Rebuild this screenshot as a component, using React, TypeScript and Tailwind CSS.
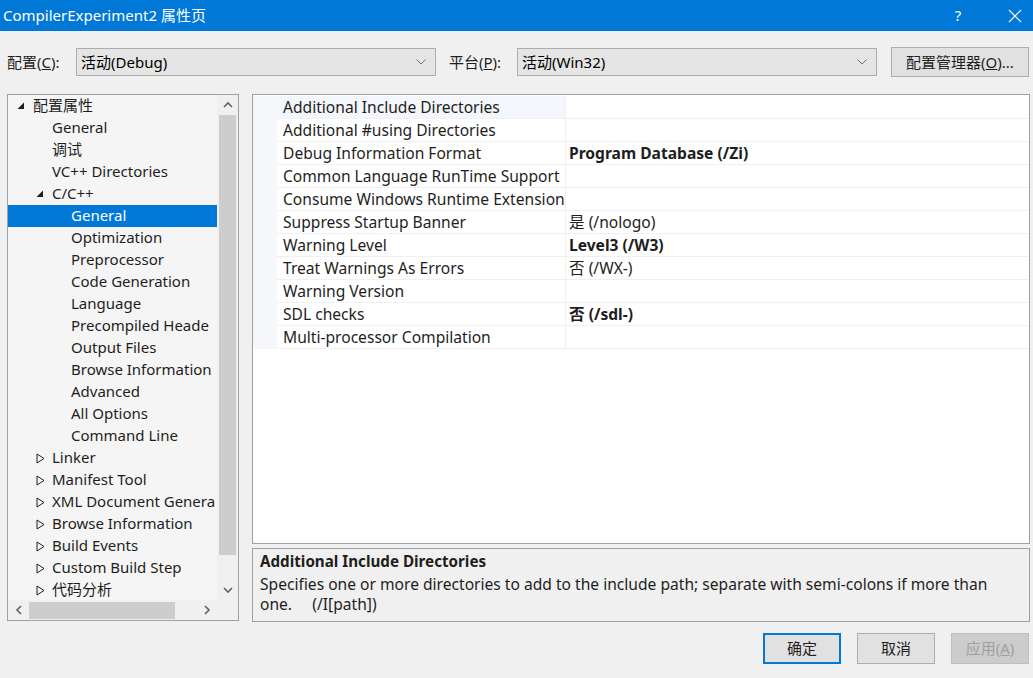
import React from "react";

const ui = { fontFamily: '"Noto Sans", "Noto Sans CJK SC", sans-serif' };

type TreeRow = { label: string; level: 0 | 1 | 2; arrow?: "open" | "closed"; selected?: boolean };

const treeRows: TreeRow[] = [
  { label: "配置属性", level: 0, arrow: "open" },
  { label: "General", level: 1 },
  { label: "调试", level: 1 },
  { label: "VC++ Directories", level: 1 },
  { label: "C/C++", level: 1, arrow: "open" },
  { label: "General", level: 2, selected: true },
  { label: "Optimization", level: 2 },
  { label: "Preprocessor", level: 2 },
  { label: "Code Generation", level: 2 },
  { label: "Language", level: 2 },
  { label: "Precompiled Heade", level: 2 },
  { label: "Output Files", level: 2 },
  { label: "Browse Information", level: 2 },
  { label: "Advanced", level: 2 },
  { label: "All Options", level: 2 },
  { label: "Command Line", level: 2 },
  { label: "Linker", level: 1, arrow: "closed" },
  { label: "Manifest Tool", level: 1, arrow: "closed" },
  { label: "XML Document Genera", level: 1, arrow: "closed" },
  { label: "Browse Information", level: 1, arrow: "closed" },
  { label: "Build Events", level: 1, arrow: "closed" },
  { label: "Custom Build Step", level: 1, arrow: "closed" },
  { label: "代码分析", level: 1, arrow: "closed" },
];

const props: { name: string; value?: string; bold?: boolean }[] = [
  { name: "Additional Include Directories" },
  { name: "Additional #using Directories" },
  { name: "Debug Information Format", value: "Program Database (/Zi)", bold: true },
  { name: "Common Language RunTime Support" },
  { name: "Consume Windows Runtime Extension" },
  { name: "Suppress Startup Banner", value: "是 (/nologo)" },
  { name: "Warning Level", value: "Level3 (/W3)", bold: true },
  { name: "Treat Warnings As Errors", value: "否 (/WX-)" },
  { name: "Warning Version" },
  { name: "SDL checks", value: "否 (/sdl-)", bold: true },
  { name: "Multi-processor Compilation" },
];

const Chevron = ({ dir }: { dir: "up" | "down" | "left" | "right" }) => {
  const vertical = dir === "up" || dir === "down";
  const d = {
    up: "M1 6 L5 2 L9 6",
    down: "M1 2 L5 6 L9 2",
    left: "M6 1 L2 5 L6 9",
    right: "M2 1 L6 5 L2 9",
  }[dir];
  return (
    <svg width={vertical ? 10 : 8} height={vertical ? 8 : 10} viewBox={vertical ? "0 0 10 8" : "0 0 8 10"}>
      <path d={d} fill="none" stroke="#606060" strokeWidth="1.6" />
    </svg>
  );
};

const SelectBox = ({ value }: { value: string }) => (
  <div className="w-[360px] h-[28px] flex items-center justify-between border border-[#adadad] bg-[#e5e5e5] pl-[4px] pr-[9px] text-[15px] text-black">
    <span>{value}</span>
    <svg width="10" height="6" viewBox="0 0 10 6">
      <path d="M0.5 0.5 L5 5 L9.5 0.5" fill="none" stroke="#707070" strokeWidth="1" />
    </svg>
  </div>
);

const Arrow = ({ kind }: { kind: "open" | "closed" }) =>
  kind === "open" ? (
    <svg width="8" height="8" viewBox="0 0 8 8">
      <path d="M7 0.5 L7 7 L0.5 7 Z" fill="#1e1e1e" />
    </svg>
  ) : (
    <svg width="9" height="11" viewBox="0 0 9 11">
      <path d="M1 1 L8 5.5 L1 10 Z" fill="none" stroke="#1e1e1e" strokeWidth="1" />
    </svg>
  );

const Tree = () => (
  <div className="w-[232px] h-[527px] border border-[#a0a0a0] bg-[#f5f5f5] flex flex-col">
    <div className="flex flex-1 min-h-0">
      <div className="w-[209px] overflow-hidden">
        {treeRows.map((r, i) => {
          const textLeft = r.level === 0 ? "pl-[25px]" : r.level === 1 ? "pl-[44px]" : "pl-[63px]";
          return (
            <div
              key={i}
              className={`relative h-[22px] flex items-center pb-[2px] whitespace-nowrap text-[15px] ${textLeft} ${
                r.selected ? "bg-[#0078d7] text-white" : "text-[#1e1e1e]"
              }`}
            >
              {r.arrow && (
                <span className={`absolute top-0 h-[22px] flex items-center ${r.level === 0 ? "left-[9px]" : "left-[28px]"}`}>
                  <Arrow kind={r.arrow} />
                </span>
              )}
              {r.label}
            </div>
          );
        })}
      </div>
      <div className="w-[21px] flex flex-col items-center bg-[#f0f0f0]">
        <div className="h-[20px] flex items-center justify-center">
          <Chevron dir="up" />
        </div>
        <div className="w-[17px] h-[440px] bg-[#cdcdcd]" />
        <div className="flex-1" />
        <div className="h-[20px] flex items-center justify-center">
          <Chevron dir="down" />
        </div>
      </div>
    </div>
    <div className="h-[20px] flex items-center bg-[#f0f0f0]">
      <div className="w-[21px] flex items-center justify-center">
        <Chevron dir="left" />
      </div>
      <div className="w-[146px] h-[17px] bg-[#cdcdcd]" />
      <div className="flex-1" />
      <div className="w-[21px] flex items-center justify-center">
        <Chevron dir="right" />
      </div>
      <div className="w-[21px]" />
    </div>
  </div>
);

const Grid = () => (
  <div className="w-[778px] h-[450px] border border-[#a0a0a0] bg-white pt-[1px]">
    {props.map((p, i) => (
      <div key={i} className="flex h-[23px] text-[15.6px] text-[#1e1e1e]">
        <div className="w-[24px] bg-[#f5f7fb]" />
        <div
          className={`w-[288px] flex items-center pl-[6px] pt-[2px] border-b border-[#f0f0f0] whitespace-nowrap overflow-hidden ${
            i === 0 ? "bg-[#f3f6fa]" : ""
          }`}
        >
          {p.name}
        </div>
        <div
          className={`flex-1 flex items-center pl-[3px] pt-[2px] border-l border-b border-[#f0f0f0] ${
            p.bold ? "font-bold" : ""
          }`}
        >
          {p.value}
        </div>
      </div>
    ))}
  </div>
);

export default function App() {
  return (
    <div className="w-[1033px] h-[678px] bg-[#f0f0f0] flex flex-col overflow-hidden" style={ui}>
      <div className="h-[31px] bg-[#0078d7] flex items-center justify-between text-white">
        <span className="pl-[3px] text-[15px]">CompilerExperiment2 属性页</span>
        <div className="flex items-center h-full">
          <span className="w-[78px] text-center text-[15px]">?</span>
          <span className="w-[36px] flex items-center justify-center">
            <svg width="14" height="14" viewBox="0 0 14 14">
              <path d="M1 1 L13 13 M13 1 L1 13" stroke="white" strokeWidth="1.2" />
            </svg>
          </span>
        </div>
      </div>

      <div className="flex items-center mt-[16px] h-[30px] text-[15px] text-[#1e1e1e]">
        <span className="pl-[7px] w-[76px]">
          配置(<span className="underline">C</span>):
        </span>
        <SelectBox value="活动(Debug)" />
        <span className="pl-[13px] w-[81px]">
          平台(<span className="underline">P</span>):
        </span>
        <SelectBox value="活动(Win32)" />
        <div className="ml-[14px] w-[138px] h-[30px] border border-[#adadad] bg-[#e1e1e1] flex items-center justify-center">
          配置管理器(<span className="underline">O</span>)...
        </div>
      </div>

      <div className="flex mt-[17px] pl-[7px] gap-[13px]">
        <Tree />
        <div className="flex flex-col gap-[4px]">
          <Grid />
          <div className="w-[778px] h-[74px] border border-[#a0a0a0] bg-[#f0f0f0] px-[7px] pt-[1px] text-[15.6px] text-[#1e1e1e] leading-[20px]">
            <div className="font-bold text-[15.2px] h-[22px] flex items-center">Additional Include Directories</div>
            <div className="mt-[2px] whitespace-nowrap">
              Specifies one or more directories to add to the include path; separate with semi-colons if more than
              <br />
              one.&nbsp;&nbsp;&nbsp;&nbsp;&nbsp;(/I[path])
            </div>
          </div>
        </div>
      </div>

      <div className="flex justify-end gap-[16px] pr-[4px] mt-[11px] text-[15px]">
        <div className="w-[78px] h-[31px] border-2 border-[#0078d7] bg-[#e1e1e1] flex items-center justify-center text-[#1e1e1e]">
          确定
        </div>
        <div className="w-[78px] h-[31px] border border-[#adadad] bg-[#e1e1e1] flex items-center justify-center text-[#1e1e1e]">
          取消
        </div>
        <div className="w-[78px] h-[31px] border border-[#bfbfbf] bg-[#cccccc] flex items-center justify-center text-[#a0a0a0]">
          应用(<span className="underline">A</span>)
        </div>
      </div>
    </div>
  );
}
